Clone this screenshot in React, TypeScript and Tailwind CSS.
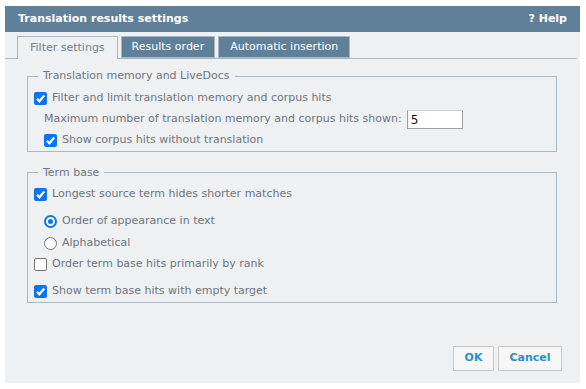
import React from "react";

function Check({ checked }: { checked: boolean }) {
  if (!checked) {
    return <span className="inline-block w-[13px] h-[13px] rounded-[2px] border border-[#767676] bg-white shrink-0" />;
  }
  return (
    <span className="inline-flex items-center justify-center w-[13px] h-[13px] rounded-[2px] bg-[#0a75f0] shrink-0">
      <svg width="11" height="11" viewBox="0 0 10 10">
        <path d="M1.8 5.2 L4 7.5 L8.4 2.3" fill="none" stroke="white" strokeWidth="2" />
      </svg>
    </span>
  );
}

function Radio({ checked }: { checked: boolean }) {
  return (
    <span
      className={
        checked
          ? "inline-flex items-center justify-center w-[13px] h-[13px] rounded-full border-2 border-[#0a75f0] bg-white shrink-0"
          : "inline-block w-[13px] h-[13px] rounded-full border border-[#767676] bg-white shrink-0"
      }
    >
      {checked && <span className="w-[5px] h-[5px] rounded-full bg-[#0a75f0]" />}
    </span>
  );
}

function Row({ children, box, className = "" }: { children: React.ReactNode; box: React.ReactNode; className?: string }) {
  return (
    <div className={"flex items-center gap-[5px] h-[21px] " + className}>
      {box}
      <span>{children}</span>
    </div>
  );
}

export default function App() {
  return (
    <div className="w-[586px] h-[389px] bg-white pt-[6px] pl-[5px] font-['DejaVu_Sans',sans-serif] text-[11px] text-[#6e767e]">
      <div className="w-[575px] h-[377px] bg-[#eef0f2] flex flex-col">
        <div className="h-[26px] bg-[#60809a] flex items-center justify-between px-[13px] text-white font-bold text-[11px]">
          <span>Translation results settings</span>
          <span>? Help</span>
        </div>
        <div className="flex items-end h-[27px] border-b border-[#a9b8c6] pl-[12px] pr-[3px] mr-[3px]">
          <div className="px-[12px] flex items-center bg-[#eef0f2] border border-b-0 border-[#a9b8c6] text-[#6e8296] -mb-px h-[23px]">
            Filter settings
          </div>
          <div className="h-[22px] ml-[3px] px-[10px] flex items-center bg-[#60809a] border border-[#a9b8c6] text-white">
            Results order
          </div>
          <div className="h-[22px] ml-[3px] px-[11px] flex items-center bg-[#60809a] border border-[#a9b8c6] text-white">
            Automatic insertion
          </div>
        </div>
        <div className="flex-1 flex flex-col px-[22px] pt-[9px]">
          <fieldset className="border border-[#a9b8c6] px-[6px] pt-[3px] pb-0 w-[530px]">
            <legend className="px-[5px] ml-[4px]">Translation memory and LiveDocs</legend>
            <Row box={<Check checked />}>Filter and limit translation memory and corpus hits</Row>
            <div className="flex items-center h-[22px] pl-[10px]">
              <span>Maximum number of translation memory and corpus hits shown:</span>
              <input
                readOnly
                value="5"
                className="ml-[5px] w-[56px] h-[19px] bg-white border border-[#a0a0a0] border-t-[#d0d0d0] px-[3px] text-[12px] text-[#111] outline-none"
              />
            </div>
            <Row box={<Check checked />} className="pl-[10px] !h-[20px]">Show corpus hits without translation</Row>
          </fieldset>
          <fieldset className="border border-[#a9b8c6] px-[6px] pt-[3px] pb-0 w-[530px] mt-[13px]">
            <legend className="px-[5px] ml-[4px]">Term base</legend>
            <Row box={<Check checked />}>Longest source term hides shorter matches</Row>
            <div className="h-[6px]" />
            <Row box={<Radio checked />} className="pl-[10px]">Order of appearance in text</Row>
            <Row box={<Radio checked={false} />} className="pl-[10px] !h-[22px]">Alphabetical</Row>
            <Row box={<Check checked={false} />}>Order term base hits primarily by rank</Row>
            <div className="h-[6px]" />
            <Row box={<Check checked />}>Show term base hits with empty target</Row>
          </fieldset>
          <div className="mt-auto mb-[12px] -mr-[4px] flex justify-end gap-[4px]">
            <button className="h-[25px] w-[41px] bg-[#f7f7f7] border border-[#c8c8c8] text-[#2a8fcc] font-bold text-[11px]">OK</button>
            <button className="h-[25px] w-[64px] bg-[#f7f7f7] border border-[#c8c8c8] text-[#2a8fcc] font-bold text-[11px]">Cancel</button>
          </div>
        </div>
      </div>
    </div>
  );
}
